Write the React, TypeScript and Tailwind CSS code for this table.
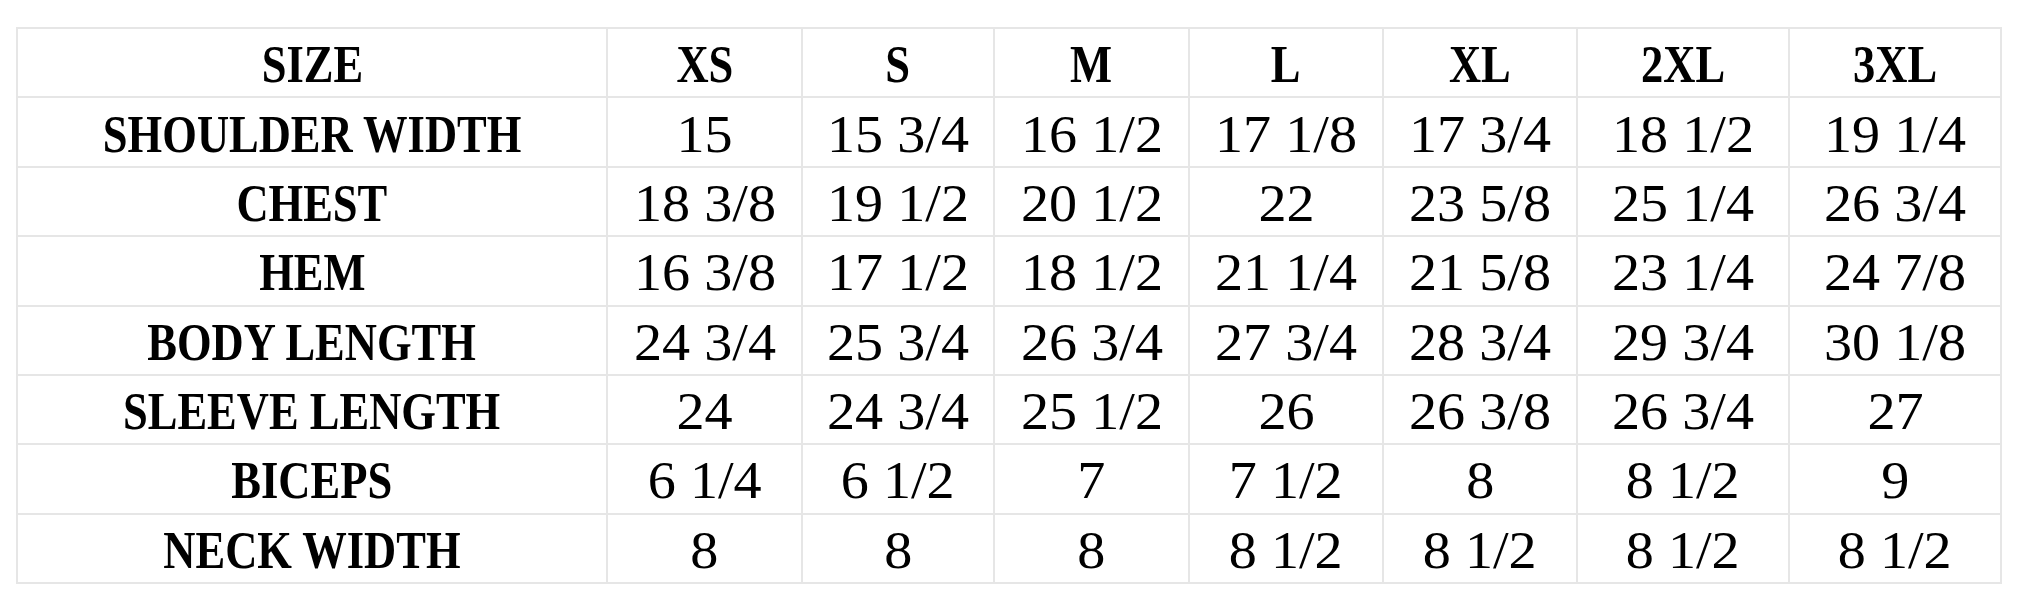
import React from "react";

const sizes = ["XS", "S", "M", "L", "XL", "2XL", "3XL"];
const rows: [string, string[]][] = [
  ["SHOULDER WIDTH", ["15", "15 3/4", "16 1/2", "17 1/8", "17 3/4", "18 1/2", "19 1/4"]],
  ["CHEST", ["18 3/8", "19 1/2", "20 1/2", "22", "23 5/8", "25 1/4", "26 3/4"]],
  ["HEM", ["16 3/8", "17 1/2", "18 1/2", "21 1/4", "21 5/8", "23 1/4", "24 7/8"]],
  ["BODY LENGTH", ["24 3/4", "25 3/4", "26 3/4", "27 3/4", "28 3/4", "29 3/4", "30 1/8"]],
  ["SLEEVE LENGTH", ["24", "24 3/4", "25 1/2", "26", "26 3/8", "26 3/4", "27"]],
  ["BICEPS", ["6 1/4", "6 1/2", "7", "7 1/2", "8", "8 1/2", "9"]],
  ["NECK WIDTH", ["8", "8", "8", "8 1/2", "8 1/2", "8 1/2", "8 1/2"]],
];

function Cell({ children, bold }: { children: React.ReactNode; bold?: boolean }) {
  return (
    <div className="flex items-center justify-center border-r-2 border-b-2 border-[#e6e6e6] pt-[4px] overflow-hidden">
      {bold ? (
        <span className="inline-block scale-x-[0.84] whitespace-nowrap font-bold text-[53px] leading-none text-black">
          {children}
        </span>
      ) : (
        <span className="inline-block scale-x-[1.06] whitespace-nowrap text-[53px] leading-none text-black">{children}</span>
      )}
    </div>
  );
}

export default function App() {
  return (
    <div className="w-[2028px] h-[615px] bg-white pl-[16px] pt-[27px] font-['Liberation_Serif',serif]">
      <div className="grid w-[1986px] h-[557px] grid-cols-[590px_195px_192px_195px_194px_194px_212px_212px] grid-rows-[repeat(8,1fr)] border-t-2 border-l-2 border-[#e6e6e6]">
        <Cell bold>SIZE</Cell>
        {sizes.map((s) => (
          <Cell bold key={s}>
            {s}
          </Cell>
        ))}
        {rows.map(([label, vals]) => (
          <React.Fragment key={label}>
            <Cell bold>{label}</Cell>
            {vals.map((v, i) => (
              <Cell key={i}>{v}</Cell>
            ))}
          </React.Fragment>
        ))}
      </div>
    </div>
  );
}
